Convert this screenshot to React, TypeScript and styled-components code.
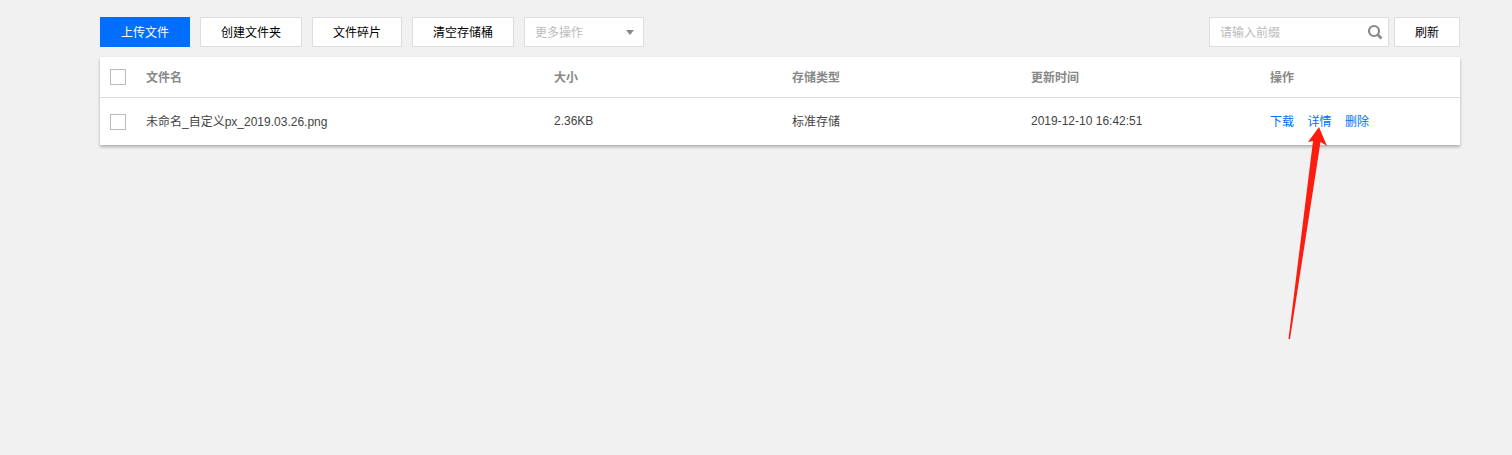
import React from "react";
import styled, { createGlobalStyle } from "styled-components";

const Global = createGlobalStyle`
  html, body { margin: 0; padding: 0; background: #f1f1f1; }
  body { font-family: "Liberation Sans", "Noto Sans CJK SC", sans-serif; font-size: 12px; color: #444; }
`;
const Page = styled.div`
  position: relative;
  width: 1512px;
  height: 455px;
  overflow: hidden;
  box-sizing: border-box;
  padding: 17px 52px 0 100px;
`;
const Toolbar = styled.div`
  display: flex;
  align-items: center;
  gap: 10px;
  height: 30px;
  margin-bottom: 10px;
`;
const Button = styled.button<{ $w: number; $primary?: boolean }>`
  box-sizing: border-box;
  width: ${(p) => p.$w}px;
  height: 30px;
  padding: 0 0 2px;
  font: inherit;
  border: ${(p) => (p.$primary ? "none" : "1px solid #ddd")};
  background: ${(p) => (p.$primary ? "#006eff" : "#fff")};
  color: ${(p) => (p.$primary ? "#fff" : "#000")};
`;
const Select = styled.div`
  box-sizing: border-box;
  width: 120px;
  height: 30px;
  border: 1px solid #ddd;
  background: #fff;
  color: #bbb;
  display: flex;
  align-items: center;
  justify-content: space-between;
  padding: 0 9px 0 10px;
`;
const Caret = styled.span`
  width: 0;
  height: 0;
  border-left: 4px solid transparent;
  border-right: 4px solid transparent;
  border-top: 5px solid #888;
`;
const RightGroup = styled.div`
  margin-left: auto;
  display: flex;
  gap: 5px;
`;
const Search = styled.div`
  box-sizing: border-box;
  width: 180px;
  height: 30px;
  border: 1px solid #ddd;
  background: #fff;
  color: #bbb;
  display: flex;
  align-items: center;
  justify-content: space-between;
  padding: 0 5px 0 10px;
`;
const Label = styled.span`
  padding-bottom: 2px;
`;
const Table = styled.div`
  background: #fff;
  box-shadow: 0 2px 3px rgba(0, 0, 0, 0.28);
`;
const Row = styled.div<{ $head?: boolean }>`
  display: grid;
  grid-template-columns: 46px 408px 238px 239px 239px 1fr;
  align-items: center;
  box-sizing: border-box;
  height: ${(p) => (p.$head ? "41px" : "47px")};
  border-bottom: ${(p) => (p.$head ? "1px solid #ddd" : "none")};
  color: ${(p) => (p.$head ? "#888" : "#444")};
  font-weight: ${(p) => (p.$head ? 700 : 400)};
`;
const Cell = styled.div`
  padding-bottom: 2px;
`;
const CheckCell = styled.div`
  padding-left: 10px;
  display: flex;
`;
const Check = styled.span`
  box-sizing: border-box;
  width: 16px;
  height: 16px;
  border: 1px solid #bbb;
  background: #fff;
`;
const Actions = styled.div`
  display: flex;
  gap: 13.5px;
  padding-bottom: 2px;
`;
const Action = styled.a`
  color: #006eff;
`;
const Arrow = styled.svg`
  position: absolute;
  left: 0;
  top: 0;
  pointer-events: none;
`;

export default function App() {
  return (
    <Page>
      <Global />
      <Toolbar>
        <Button $w={90} $primary>上传文件</Button>
        <Button $w={102}>创建文件夹</Button>
        <Button $w={90}>文件碎片</Button>
        <Button $w={102}>清空存储桶</Button>
        <Select><Label>更多操作</Label><Caret /></Select>
        <RightGroup>
          <Search>
            <Label>请输入前缀</Label>
            <svg width="16" height="16" viewBox="0 0 16 16" fill="none" stroke="#888">
              <circle cx="7" cy="7" r="5" strokeWidth="2.2" />
              <path d="M10.5 10.5 L14.5 14.5" strokeWidth="2.6" />
            </svg>
          </Search>
          <Button $w={66}>刷新</Button>
        </RightGroup>
      </Toolbar>
      <Table>
        <Row $head>
          <CheckCell><Check /></CheckCell>
          <Cell>文件名</Cell>
          <Cell>大小</Cell>
          <Cell>存储类型</Cell>
          <Cell>更新时间</Cell>
          <Cell>操作</Cell>
        </Row>
        <Row>
          <CheckCell><Check /></CheckCell>
          <Cell>未命名_自定义px_2019.03.26.png</Cell>
          <Cell>2.36KB</Cell>
          <Cell>标准存储</Cell>
          <Cell>2019-12-10 16:42:51</Cell>
          <Actions>
            <Action>下载</Action>
            <Action>详情</Action>
            <Action>删除</Action>
          </Actions>
        </Row>
      </Table>
      <Arrow width="1512" height="455">
        <polygon points="1319,127 1327,146 1320.5,142 1290,339 1288.5,339 1313,141 1308,142" fill="#fd1c10" />
      </Arrow>
    </Page>
  );
}
